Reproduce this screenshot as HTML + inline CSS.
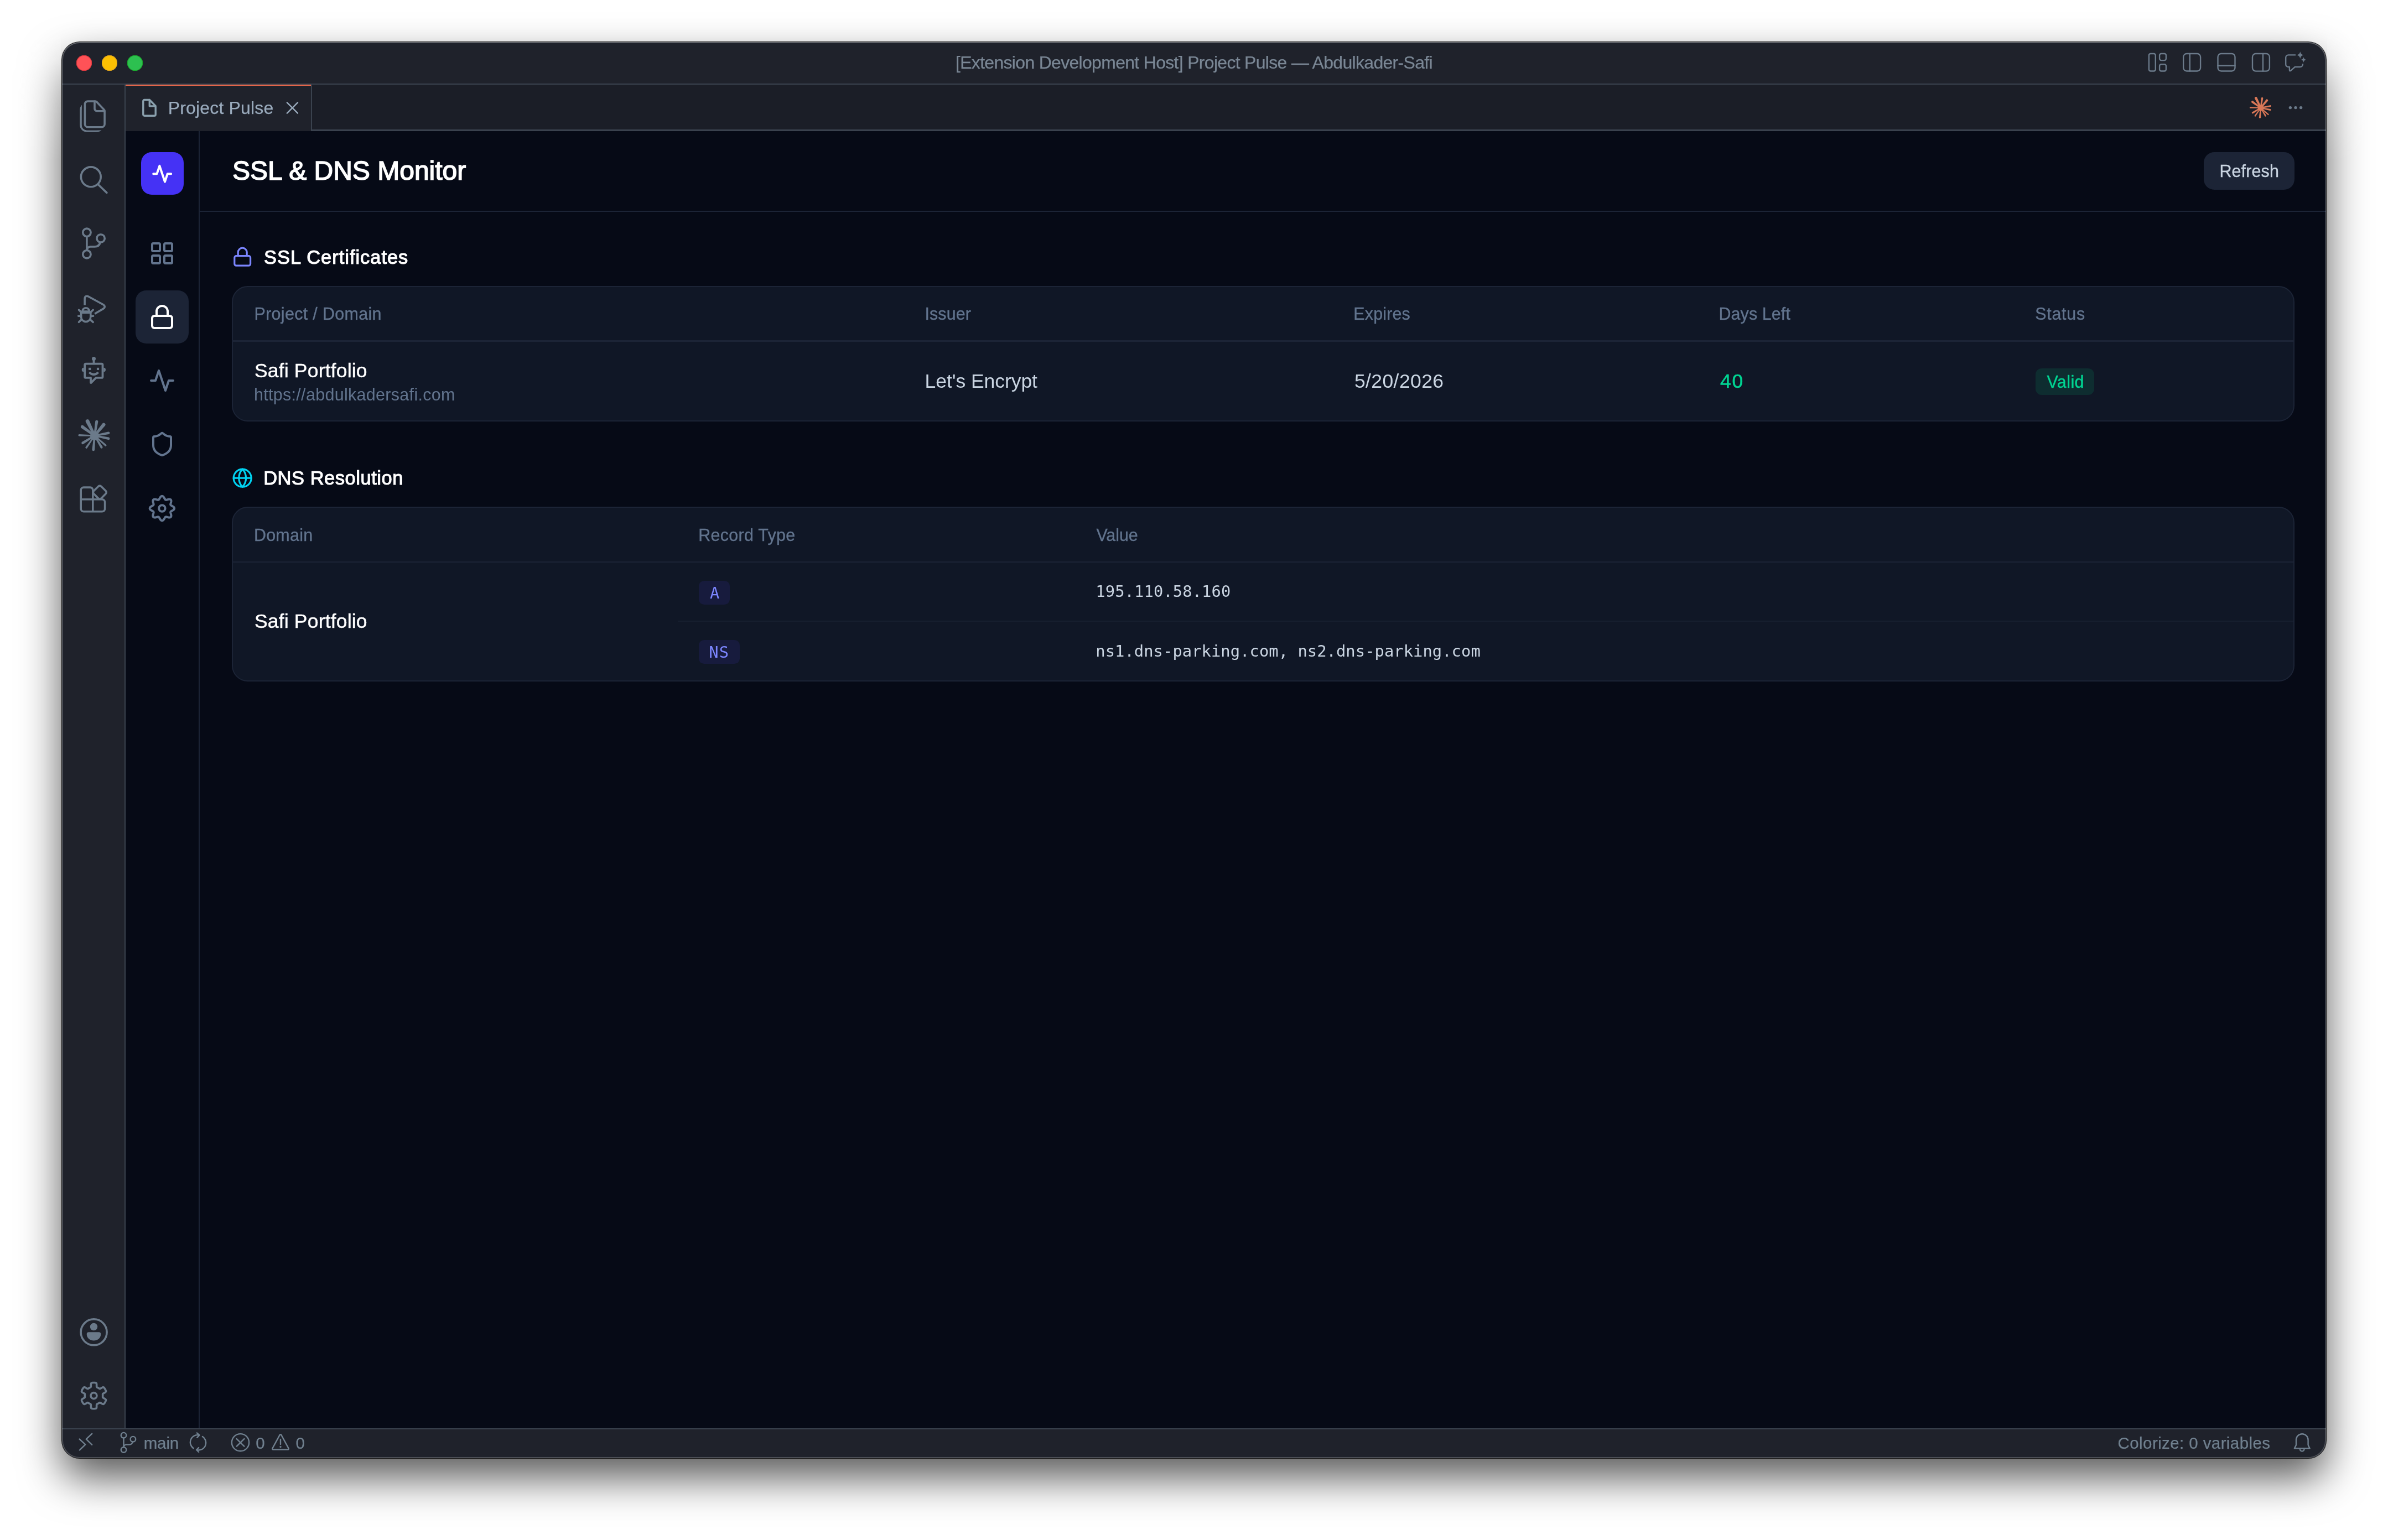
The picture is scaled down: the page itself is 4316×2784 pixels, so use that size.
<!DOCTYPE html>
<html lang="en"><head><meta charset="utf-8"><title>Project Pulse — SSL &amp; DNS Monitor</title>
<style>
html,body{margin:0;padding:0;background:#fff;}
body{width:4316px;height:2784px;position:relative;overflow:hidden;}
#shadow{position:absolute;left:112px;top:76px;width:4092px;height:2560px;border-radius:32px;background:#1f222b;
 box-shadow:0 0 0 1px rgba(0,0,0,.85),0 35px 76px rgba(0,0,0,.66);}
.fade{position:absolute;top:50px;width:110px;height:242px;background:linear-gradient(to bottom,rgba(255,255,255,0) 0,rgba(255,255,255,.34) 60px,rgba(255,255,255,0) 100%);}
#win{position:absolute;left:0;top:0;width:4316px;height:2784px;will-change:transform;clip-path:inset(76px 112px 148px 112px round 32px);}
#win div,#win span.t,#win svg{position:absolute;box-sizing:border-box;}
#win span.t{white-space:pre;display:block;}
#win header,#win nav,#win main,#win section,#win footer,#win aside{display:contents;}
#rim{position:absolute;left:112px;top:76px;width:4092px;height:2560px;border-radius:32px;box-sizing:border-box;
 box-shadow:inset 0 0 0 2px rgba(255,255,255,.2), inset 0 2px 0 0 rgba(255,255,255,.12);pointer-events:none;}
</style></head><body>
<div id="shadow"></div>
<div class="fade" style="left:0"></div><div class="fade" style="left:4206px"></div>
<div id="win">
<section aria-label="Window chrome">
<div style="left:112.0px;top:76.0px;width:4092.0px;height:2560.0px;background:#1f222b;"></div>
<div style="left:112.0px;top:150.6px;width:4092.0px;height:2.4px;background:#3a424e;"></div>
<div style="left:227.0px;top:153.0px;width:3977.0px;height:81.4px;background:#1b1e27;"></div>
<div style="left:227.0px;top:234.4px;width:3977.0px;height:2.4px;background:#3a424e;"></div>
<div style="left:227.0px;top:153.0px;width:335.0px;height:83.8px;background:#1f222b;"></div>
<div style="left:227.0px;top:153.0px;width:335.0px;height:2.2px;background:#f16a4b;"></div>
<div style="left:562.0px;top:153.0px;width:2.3px;height:83.8px;background:#3a424e;"></div>
<div style="left:224.7px;top:153.0px;width:2.3px;height:2428.6px;background:#3a424e;"></div>
<div style="left:227.0px;top:236.8px;width:3977.0px;height:2344.8px;background:#060a16;"></div>
<div style="left:359.0px;top:236.8px;width:2.4px;height:2344.8px;background:#1c2436;"></div>
<div style="left:361.4px;top:380.8px;width:3842.6px;height:2.4px;background:#1c2436;"></div>
<div style="left:112.0px;top:2581.6px;width:4092.0px;height:54.4px;background:#1f222b;"></div>
<div style="left:112.0px;top:2581.6px;width:4092.0px;height:2.4px;background:#3a424e;"></div>
</section><header aria-label="Title bar">
<div style="left:138px;top:100px;width:28px;height:28px;border-radius:50%;background:#ff5257;box-shadow:inset 0 0 0 1px #e0383e;"></div>
<div style="left:184px;top:100px;width:28px;height:28px;border-radius:50%;background:#fcc003;box-shadow:inset 0 0 0 1px #dea123;"></div>
<div style="left:230px;top:100px;width:28px;height:28px;border-radius:50%;background:#2dc050;box-shadow:inset 0 0 0 1px #1aab29;"></div>
<span class="t " style="left:1727.00px;top:97.33px;font:400 31.98px/1 'Liberation Sans', sans-serif;color:#7a8795;letter-spacing:-0.68px;-webkit-text-stroke:0.25px #7a8795;">[Extension Development Host] Project Pulse — Abdulkader-Safi</span>
</header><nav aria-label="Editor tabs">
<span class="t " style="left:303.80px;top:179.13px;font:400 31.98px/1 'Liberation Sans', sans-serif;color:#9aabbd;letter-spacing:0.17px;-webkit-text-stroke:0.25px #9aabbd;">Project Pulse</span>
</nav><main aria-label="Project Pulse webview"><header>
<span class="t " style="left:419.90px;top:285.17px;font:400 48.00px/1 'Liberation Sans', sans-serif;color:#ffffff;-webkit-text-stroke:1.5px #ffffff;">SSL &amp; DNS Monitor</span>
<div style="left:3982.8px;top:275px;width:164.2px;height:67.6px;border-radius:19.2px;background:#1c2436;"></div>
<span class="t " style="left:4011.40px;top:294.23px;font:400 30.44px/1 'Liberation Sans', sans-serif;color:#cad5e2;letter-spacing:0.16px;-webkit-text-stroke:0.4px #cad5e2;">Refresh</span>
</header><nav aria-label="Pulse navigation">
<div style="left:255px;top:274.8px;width:76.8px;height:76.8px;border-radius:19.2px;background:#4532f5;"></div>
<div style="left:245px;top:524.8px;width:96px;height:96px;border-radius:19.2px;background:#1c2436;"></div>
</nav><section aria-label="SSL Certificates">
<span class="t " style="left:477.00px;top:447.88px;font:400 34.40px/1 'Liberation Sans', sans-serif;color:#ffffff;letter-spacing:1.00px;-webkit-text-stroke:1.1px #ffffff;">SSL Certificates</span>
<div style="left:419px;top:517.2px;width:3728px;height:245.19999999999993px;border-radius:28.8px;background:#101726;border:2.4px solid #1c2436;"></div>
<div style="left:421.4px;top:615.2px;width:3723.2px;height:2.4px;background:#1c2436;"></div>
<span class="t " style="left:459.50px;top:552.23px;font:400 30.44px/1 'Liberation Sans', sans-serif;color:#62748e;letter-spacing:0.33px;-webkit-text-stroke:0.35px #62748e;">Project / Domain</span>
<span class="t " style="left:1671.50px;top:552.43px;font:400 30.44px/1 'Liberation Sans', sans-serif;color:#62748e;letter-spacing:0.09px;-webkit-text-stroke:0.35px #62748e;">Issuer</span>
<span class="t " style="left:2446.30px;top:552.43px;font:400 30.44px/1 'Liberation Sans', sans-serif;color:#62748e;letter-spacing:0.17px;-webkit-text-stroke:0.35px #62748e;">Expires</span>
<span class="t " style="left:3106.50px;top:552.43px;font:400 30.44px/1 'Liberation Sans', sans-serif;color:#62748e;letter-spacing:0.10px;-webkit-text-stroke:0.35px #62748e;">Days Left</span>
<span class="t " style="left:3678.20px;top:552.43px;font:400 30.44px/1 'Liberation Sans', sans-serif;color:#62748e;letter-spacing:0.73px;-webkit-text-stroke:0.35px #62748e;">Status</span>
<span class="t " style="left:459.90px;top:653.13px;font:400 35.52px/1 'Liberation Sans', sans-serif;color:#ffffff;letter-spacing:0.18px;-webkit-text-stroke:0.45px #ffffff;">Safi Portfolio</span>
<span class="t " style="left:458.90px;top:698.23px;font:400 30.44px/1 'Liberation Sans', sans-serif;color:#62748e;letter-spacing:0.33px;">https://abdulkadersafi.com</span>
<span class="t " style="left:1671.50px;top:671.93px;font:400 35.52px/1 'Liberation Sans', sans-serif;color:#cad5e2;letter-spacing:-0.06px;">Let's Encrypt</span>
<span class="t " style="left:2447.90px;top:672.23px;font:400 35.52px/1 'Liberation Sans', sans-serif;color:#cad5e2;letter-spacing:0.40px;">5/20/2026</span>
<span class="t " style="left:3108.90px;top:671.93px;font:400 35.52px/1 'Liberation Sans', sans-serif;color:#00d492;letter-spacing:1.76px;-webkit-text-stroke:0.5px #00d492;">40</span>
<div style="left:3678.9px;top:666px;width:106.2px;height:47.9px;border-radius:11px;background:#0e2d30;"></div>
<span class="t " style="left:3699.40px;top:675.23px;font:400 30.44px/1 'Liberation Sans', sans-serif;color:#00d492;letter-spacing:0.43px;-webkit-text-stroke:0.4px #00d492;">Valid</span>
</section><section aria-label="DNS Resolution">
<span class="t " style="left:476.20px;top:847.28px;font:400 34.40px/1 'Liberation Sans', sans-serif;color:#ffffff;letter-spacing:0.58px;-webkit-text-stroke:1.1px #ffffff;">DNS Resolution</span>
<div style="left:419px;top:916.4px;width:3728px;height:315.19999999999993px;border-radius:28.8px;background:#101726;border:2.4px solid #1c2436;"></div>
<div style="left:421.4px;top:1014.8px;width:3723.2px;height:2.4px;background:#1c2436;"></div>
<div style="left:1224.9px;top:1122.0px;width:2919.7px;height:2.4px;background:#161e2e;"></div>
<span class="t " style="left:458.90px;top:952.23px;font:400 30.44px/1 'Liberation Sans', sans-serif;color:#62748e;letter-spacing:0.27px;-webkit-text-stroke:0.35px #62748e;">Domain</span>
<span class="t " style="left:1262.30px;top:952.23px;font:400 30.44px/1 'Liberation Sans', sans-serif;color:#62748e;letter-spacing:0.28px;-webkit-text-stroke:0.35px #62748e;">Record Type</span>
<span class="t " style="left:1981.40px;top:952.23px;font:400 30.44px/1 'Liberation Sans', sans-serif;color:#62748e;letter-spacing:-0.07px;-webkit-text-stroke:0.35px #62748e;">Value</span>
<span class="t " style="left:459.90px;top:1106.13px;font:400 35.52px/1 'Liberation Sans', sans-serif;color:#ffffff;letter-spacing:0.18px;-webkit-text-stroke:0.45px #ffffff;">Safi Portfolio</span>
<div style="left:1263.2px;top:1050px;width:55.6px;height:42.8px;border-radius:9.6px;background:#171b3d;"></div>
<div style="left:1263.2px;top:1157.4px;width:73.8px;height:42.8px;border-radius:9.6px;background:#171b3d;"></div>
<span class="t " style="left:1283.00px;top:1057.64px;font:400 28.80px/1 'DejaVu Sans Mono', 'Liberation Mono', monospace;color:#7c86ff;">A</span>
<span class="t " style="left:1281.20px;top:1165.14px;font:400 28.80px/1 'DejaVu Sans Mono', 'Liberation Mono', monospace;color:#7c86ff;letter-spacing:1.16px;">NS</span>
<span class="t " style="left:1980.30px;top:1054.64px;font:400 28.80px/1 'DejaVu Sans Mono', 'Liberation Mono', monospace;color:#cad5e2;letter-spacing:0.10px;">195.110.58.160</span>
<span class="t " style="left:1980.30px;top:1162.64px;font:400 28.80px/1 'DejaVu Sans Mono', 'Liberation Mono', monospace;color:#cad5e2;letter-spacing:0.05px;">ns1.dns-parking.com, ns2.dns-parking.com</span>
</section></main><footer aria-label="Status bar">
<span class="t " style="left:259.70px;top:2594.31px;font:400 29.52px/1 'Liberation Sans', sans-serif;color:#70808f;letter-spacing:-0.15px;-webkit-text-stroke:0.25px #70808f;">main</span>
<span class="t " style="left:462.30px;top:2594.31px;font:400 29.52px/1 'Liberation Sans', sans-serif;color:#70808f;-webkit-text-stroke:0.25px #70808f;">0</span>
<span class="t " style="left:534.40px;top:2594.31px;font:400 29.52px/1 'Liberation Sans', sans-serif;color:#70808f;-webkit-text-stroke:0.25px #70808f;">0</span>
<span class="t " style="left:3827.60px;top:2594.01px;font:400 29.52px/1 'Liberation Sans', sans-serif;color:#70808f;letter-spacing:0.40px;-webkit-text-stroke:0.25px #70808f;">Colorize: 0 variables</span>
</footer><aside aria-hidden="true">
<svg style="left:130.0px;top:170.0px;width:80.0px;height:80.0px;" viewBox="0 0 80 80" fill="none" stroke="#6b7a8a" stroke-width="3.6" stroke-linecap="round" stroke-linejoin="round"><path d="M41 13.1H28.6a5.2 5.2 0 0 0-5.2 5.2V54.6a5.2 5.2 0 0 0 5.2 5.2H53.9a5.2 5.2 0 0 0 5.2-5.2V30.6a3 3 0 0 0-.9-2.1L44.6 14.1a3.4 3.4 0 0 0-2.4-1Z"/><path d="M41 13.3V26.6a4.2 4.2 0 0 0 4.2 4.2H58.9"/><mask id="mf" maskUnits="userSpaceOnUse" x="0" y="0" width="80" height="80"><rect width="80" height="80" fill="#fff" stroke="none"/><rect x="17.9" y="-10" width="70" height="75.4" rx="9" fill="#000" stroke="none"/></mask><rect x="16.1" y="17.5" width="39.5" height="49.5" rx="11" mask="url(#mf)"/></svg>
<svg style="left:130.0px;top:285.0px;width:80.0px;height:80.0px;" viewBox="0 0 80 80" fill="none" stroke="#6b7a8a" stroke-width="3.6" stroke-linecap="round" stroke-linejoin="round"><circle cx="34.3" cy="34.8" r="17.9"/><path d="M47.6 48.7L62.9 63.4"/></svg>
<svg style="left:130.0px;top:400.0px;width:80.0px;height:80.0px;" viewBox="0 0 80 80" fill="none" stroke="#6b7a8a" stroke-width="3.6" stroke-linecap="round" stroke-linejoin="round"><circle cx="26.9" cy="20.3" r="7.15"/><circle cx="52.1" cy="30.9" r="7.15"/><circle cx="26.9" cy="59.7" r="7.15"/><path d="M26.9 27.5V52.5M51.2 38C50 43.5 46 46 41 46H33.5a6.6 6.6 0 0 0-6.6 6.5" stroke-linecap="butt"/></svg>
<svg style="left:130.0px;top:520.0px;width:80.0px;height:80.0px;" viewBox="0 0 80 80" fill="none" stroke="#6b7a8a" stroke-width="3.6" stroke-linecap="round" stroke-linejoin="round"><path d="M23.1 31.6V20.3C23.1 15.2 26.6 14.2 30.2 16.2L56.3 30.5C60.2 32.7 60.2 36.3 56.3 38.4L41.2 47.2" stroke-linecap="butt"/><path d="M16.6 45.2H33.8V53a8.6 8.6 0 0 1-17.2 0Z"/><path d="M18.9 43a6.3 6.3 0 0 1 12.6 0Z"/><path d="M12.5 40.3L17 44.6M38.2 40.3L33.6 44.6M11.7 51.3H16.6M33.8 51.3H38.6M12.5 62.3L17.8 57.4M38.2 62.3L32.6 57.4"/></svg>
<svg style="left:130.0px;top:630.0px;width:80.0px;height:80.0px;" viewBox="0 0 80 80" fill="none" stroke="#6b7a8a" stroke-width="3.8" stroke-linecap="round" stroke-linejoin="round"><circle cx="39.5" cy="18.4" r="3.5" fill="#6b7a8a" stroke="none"/><path d="M39.5 18.4V27.6" stroke-linecap="butt"/><path d="M25.2 27.6H53.5a2 2 0 0 1 2 2V50.9a2 2 0 0 1-2 2H43.6L34.7 61.9a.4.4 0 0 1-.7-.3V52.9H25.2a2 2 0 0 1-2-2V29.6a2 2 0 0 1 2-2Z"/><path d="M21.4 34.7a3.7 3.7 0 0 0 0 7.4ZM57.3 34.7a3.7 3.7 0 0 1 0 7.4Z" fill="#6b7a8a" stroke="none"/><rect x="30.1" y="34.8" width="4.2" height="4.2" fill="#6b7a8a" stroke="none"/><rect x="44.9" y="34.8" width="4.2" height="4.2" fill="#6b7a8a" stroke="none"/><path d="M31.3 43.2Q39.5 51 47.7 43.2" stroke-linecap="butt"/></svg>
<svg style="left:130.0px;top:746.0px;width:80.0px;height:80.0px;" viewBox="0 0 80 80" fill="#6b7a8a" stroke="none" stroke-width="0" stroke-linecap="round" stroke-linejoin="round"><path d="M41.42 36.93L31.15 14.01A3.40 3.40 0 0 0 25.06 17.03L37.03 39.10Z"/><path d="M43.43 37.92L47.32 16.51A2.60 2.60 0 0 0 42.18 15.75L39.73 37.37Z"/><path d="M45.27 39.94L59.80 23.73A3.10 3.10 0 0 0 55.02 19.78L41.83 37.10Z"/><path d="M45.25 42.51L66.52 39.09A2.35 2.35 0 0 0 65.63 34.47L44.61 39.18Z"/><path d="M44.57 44.07L65.60 49.11A2.35 2.35 0 0 0 66.56 44.51L45.26 40.76Z"/><path d="M43.14 45.22L59.57 60.37A1.80 1.80 0 0 0 61.95 57.67L44.86 43.27Z"/><path d="M41.75 45.81L51.77 63.75A2.10 2.10 0 0 0 55.37 61.60L44.35 44.26Z"/><path d="M38.97 45.44L36.44 66.86A2.35 2.35 0 0 0 41.12 67.27L42.34 45.73Z"/><path d="M37.65 44.14L24.63 61.98A1.80 1.80 0 0 0 27.59 64.04L39.78 45.62Z"/><path d="M36.71 42.25L18.27 52.81A2.35 2.35 0 0 0 20.73 56.81L38.48 45.14Z"/><path d="M37.04 40.19L13.27 39.02A1.80 1.80 0 0 0 13.17 42.62L36.97 42.78Z"/><path d="M38.96 37.59L20.49 23.26A2.85 2.85 0 0 0 17.15 27.88L36.56 40.92Z"/><circle cx="41.0" cy="41.6" r="8.20"/></svg>
<svg style="left:130.0px;top:862.0px;width:80.0px;height:80.0px;" viewBox="0 0 80 80" fill="none" stroke="#6b7a8a" stroke-width="3.6" stroke-linecap="round" stroke-linejoin="round"><path d="M37.8 62.7V23.9a4.8 4.8 0 0 0-4.8-4.8H21.2a5 5 0 0 0-5 5V57.7a5 5 0 0 0 5 5H54.6a5 5 0 0 0 5-5V45.8a5 5 0 0 0-5-5H16.2"/><rect x="-9.5" y="-9.5" width="19" height="19" rx="3.6" transform="translate(50.3 28.05) rotate(45)"/></svg>
<svg style="left:130.0px;top:2370.0px;width:80.0px;height:80.0px;" viewBox="0 0 80 80" fill="none" stroke="#6b7a8a" stroke-width="3.6" stroke-linecap="round" stroke-linejoin="round"><circle cx="39.6" cy="38.3" r="23.5"/><circle cx="39.5" cy="28.6" r="6.75" fill="#6b7a8a" stroke="none"/><path d="M30.2 38.2H48.8a3.5 3.5 0 0 1 3.5 3.5C52.3 49 46 53.5 39.5 53.5S26.7 49 26.7 41.7a3.5 3.5 0 0 1 3.5-3.5Z" fill="#6b7a8a" stroke="none"/></svg>
<svg style="left:130.0px;top:2484.0px;width:80.0px;height:80.0px;" viewBox="0 0 80 80" fill="none" stroke="#6b7a8a" stroke-width="3.6" stroke-linecap="round" stroke-linejoin="round"><path d="M55.70 39.10L55.69 39.52L55.68 39.95L55.66 40.37L55.63 40.80L55.60 41.22L55.60 41.65L55.69 42.10L56.05 42.62L57.01 43.30L58.72 44.25L60.39 45.29L61.26 46.17L61.50 46.89L61.44 47.52L61.27 48.12L61.04 48.69L60.80 49.26L60.53 49.81L60.24 50.36L59.94 50.90L59.62 51.43L59.29 51.95L58.94 52.46L58.58 52.96L58.19 53.44L57.76 53.89L57.24 54.25L56.51 54.41L55.31 54.10L53.57 53.17L51.90 52.16L50.82 51.67L50.19 51.62L49.76 51.77L49.39 51.98L49.03 52.22L48.68 52.46L48.32 52.69L47.96 52.91L47.60 53.13L47.23 53.34L46.86 53.54L46.48 53.73L46.10 53.91L45.71 54.10L45.34 54.32L45.00 54.62L44.73 55.19L44.61 56.37L44.65 58.32L44.59 60.29L44.26 61.48L43.75 62.04L43.18 62.31L42.58 62.46L41.97 62.55L41.35 62.62L40.74 62.67L40.12 62.69L39.50 62.70L38.88 62.69L38.26 62.67L37.65 62.62L37.03 62.55L36.42 62.46L35.82 62.31L35.25 62.04L34.74 61.48L34.41 60.29L34.35 58.32L34.39 56.37L34.27 55.19L34.00 54.62L33.66 54.32L33.29 54.10L32.90 53.91L32.52 53.73L32.14 53.54L31.77 53.34L31.40 53.13L31.04 52.91L30.68 52.69L30.32 52.46L29.97 52.22L29.61 51.98L29.24 51.77L28.81 51.62L28.18 51.67L27.10 52.16L25.43 53.17L23.69 54.10L22.49 54.41L21.76 54.25L21.24 53.89L20.81 53.44L20.42 52.96L20.06 52.46L19.71 51.95L19.38 51.43L19.06 50.90L18.76 50.36L18.47 49.81L18.20 49.26L17.96 48.69L17.73 48.12L17.56 47.52L17.50 46.89L17.74 46.17L18.61 45.29L20.28 44.25L21.99 43.30L22.95 42.62L23.31 42.10L23.40 41.65L23.40 41.22L23.37 40.80L23.34 40.37L23.32 39.95L23.31 39.52L23.30 39.10L23.31 38.68L23.32 38.25L23.34 37.83L23.37 37.40L23.40 36.98L23.40 36.55L23.31 36.10L22.95 35.58L21.99 34.90L20.28 33.95L18.61 32.91L17.74 32.03L17.50 31.31L17.56 30.68L17.73 30.08L17.96 29.51L18.20 28.94L18.47 28.39L18.76 27.84L19.06 27.30L19.38 26.77L19.71 26.25L20.06 25.74L20.42 25.24L20.81 24.76L21.24 24.31L21.76 23.95L22.49 23.79L23.69 24.10L25.43 25.03L27.10 26.04L28.18 26.53L28.81 26.58L29.24 26.43L29.61 26.22L29.97 25.98L30.32 25.74L30.68 25.51L31.04 25.29L31.40 25.07L31.77 24.86L32.14 24.66L32.52 24.47L32.90 24.29L33.29 24.10L33.66 23.88L34.00 23.58L34.27 23.01L34.39 21.83L34.35 19.88L34.41 17.91L34.74 16.72L35.25 16.16L35.82 15.89L36.42 15.74L37.03 15.65L37.65 15.58L38.26 15.53L38.88 15.51L39.50 15.50L40.12 15.51L40.74 15.53L41.35 15.58L41.97 15.65L42.58 15.74L43.18 15.89L43.75 16.16L44.26 16.72L44.59 17.91L44.65 19.88L44.61 21.83L44.73 23.01L45.00 23.58L45.34 23.88L45.71 24.10L46.10 24.29L46.48 24.47L46.86 24.66L47.23 24.86L47.60 25.07L47.96 25.29L48.32 25.51L48.68 25.74L49.03 25.98L49.39 26.22L49.76 26.43L50.19 26.58L50.82 26.53L51.90 26.04L53.57 25.03L55.31 24.10L56.51 23.79L57.24 23.95L57.76 24.31L58.19 24.76L58.58 25.24L58.94 25.74L59.29 26.25L59.62 26.77L59.94 27.30L60.24 27.84L60.53 28.39L60.80 28.94L61.04 29.51L61.27 30.08L61.44 30.68L61.50 31.31L61.26 32.03L60.39 32.91L58.72 33.95L57.01 34.90L56.05 35.58L55.69 36.10L55.60 36.55L55.60 36.98L55.63 37.40L55.66 37.83L55.68 38.25L55.69 38.68Z"/><circle cx="39.5" cy="39.1" r="5.5"/></svg>
<svg style="left:3870.0px;top:80.0px;width:320.0px;height:70.0px;" viewBox="3870 80 320 70" fill="none" stroke="#6b7a8a" stroke-width="2.4" stroke-linecap="round" stroke-linejoin="round"><rect x="3883.9" y="97" width="11.9" height="31.5" rx="3"/><rect x="3903.1" y="97" width="11.8" height="12.1" rx="3"/><rect x="3903.1" y="116.3" width="11.8" height="12.2" rx="3"/><rect x="3946.2" y="97" width="30.9" height="31.5" rx="6"/><path d="M3957.8 97V128.5"/><rect x="4008.5" y="97" width="31" height="31.5" rx="6"/><path d="M4008.5 118.7H4039.5"/><rect x="4071" y="97" width="30.9" height="31.6" rx="6"/><path d="M4090 97V128.6"/><path d="M4149 99.4H4136a4.8 4.8 0 0 0-4.8 4.8V116.2a4.8 4.8 0 0 0 4.8 4.8H4137.9V126.6c0 1.7 1 2.2 2.2 1.2L4147.8 121H4157a5 5 0 0 0 5-5V115.3" stroke-linecap="butt"/></svg>
<svg style="left:4140.0px;top:85.0px;width:40.0px;height:40.0px;" viewBox="4140 85 40 40" fill="#6b7a8a" stroke="none" stroke-width="0" stroke-linecap="round" stroke-linejoin="round"><path d="M4157.3 93.3Q4158.308 98.592 4163.6 99.6Q4158.308 100.60799999999999 4157.3 105.89999999999999Q4156.292 100.60799999999999 4151.0 99.6Q4156.292 98.592 4157.3 93.3Z"/><path d="M4163.4 103.3Q4164.168 107.332 4168.2 108.1Q4164.168 108.868 4163.4 112.89999999999999Q4162.632 108.868 4158.599999999999 108.1Q4162.632 107.332 4163.4 103.3Z"/></svg>
<svg style="left:4056.0px;top:165.0px;width:60.0px;height:60.0px;" viewBox="0 0 60 60" fill="#d97757" stroke="none" stroke-width="0" stroke-linecap="round" stroke-linejoin="round"><path d="M30.29 26.82L23.30 11.24A2.31 2.31 0 0 0 19.16 13.29L27.30 28.30Z"/><path d="M31.66 27.49L34.30 12.94A1.77 1.77 0 0 0 30.80 12.42L29.14 27.12Z"/><path d="M32.90 28.87L42.78 17.85A2.11 2.11 0 0 0 39.53 15.16L30.56 26.94Z"/><path d="M32.89 30.62L47.35 28.29A1.60 1.60 0 0 0 46.75 25.15L32.45 28.36Z"/><path d="M32.43 31.68L46.73 35.11A1.60 1.60 0 0 0 47.38 31.98L32.90 29.43Z"/><path d="M31.46 32.46L42.63 42.77A1.22 1.22 0 0 0 44.25 40.93L32.62 31.14Z"/><path d="M30.51 32.86L37.32 45.06A1.43 1.43 0 0 0 39.77 43.60L32.28 31.81Z"/><path d="M28.62 32.61L26.90 47.18A1.60 1.60 0 0 0 30.08 47.45L30.91 32.81Z"/><path d="M27.72 31.73L18.87 43.86A1.22 1.22 0 0 0 20.88 45.26L29.17 32.74Z"/><path d="M27.08 30.44L14.54 37.62A1.60 1.60 0 0 0 16.22 40.34L28.28 32.40Z"/><path d="M27.31 29.04L11.14 28.25A1.22 1.22 0 0 0 11.08 30.69L27.26 30.80Z"/><path d="M28.61 27.28L16.06 17.53A1.94 1.94 0 0 0 13.78 20.67L26.98 29.54Z"/><circle cx="30" cy="30" r="5.58"/></svg>
<svg style="left:4130.0px;top:185.0px;width:40.0px;height:20.0px;" viewBox="4130 185 40 20" fill="#6b7a8a" stroke="none" stroke-width="0" stroke-linecap="round" stroke-linejoin="round"><circle cx="4139.4" cy="194.6" r="2.7"/><circle cx="4149" cy="194.6" r="2.7"/><circle cx="4158.6" cy="194.6" r="2.7"/></svg>
<svg style="left:250.0px;top:170.0px;width:40.0px;height:50.0px;" viewBox="250 170 40 50" fill="none" stroke="#8aa0ad" stroke-width="3.4" stroke-linecap="round" stroke-linejoin="round"><path d="M270.3 180.5H261a2.2 2.2 0 0 0-2.2 2.2V207a2.2 2.2 0 0 0 2.2 2.2H279a2.2 2.2 0 0 0 2.2-2.2V191.6L270.3 180.5V191.9H281.2"/></svg>
<svg style="left:510.0px;top:178.0px;width:36.0px;height:34.0px;" viewBox="510 178 36 34" fill="none" stroke="#9aabbd" stroke-width="2.4" stroke-linecap="round" stroke-linejoin="round"><path d="M518.8 185.4L538 204.7M538 185.4L518.8 204.7"/></svg>
<svg style="left:138.0px;top:2586.0px;width:34.0px;height:42.0px;" viewBox="138 2586 34 42" fill="none" stroke="#70808f" stroke-width="2.4" stroke-linecap="round" stroke-linejoin="round"><path d="M143.6 2601.6L154.3 2611.4L143.9 2621.5M166.2 2591.8L155.8 2601.7L166.2 2611.8"/></svg>
<svg style="left:214.0px;top:2586.0px;width:36.0px;height:44.0px;" viewBox="214 2586 36 44" fill="none" stroke="#70808f" stroke-width="2.4" stroke-linecap="round" stroke-linejoin="round"><circle cx="223.5" cy="2594.7" r="4.8"/><circle cx="240.4" cy="2601.7" r="4.8"/><circle cx="223.5" cy="2621" r="4.8"/><path d="M223.5 2599.5V2616.2M239.8 2606.5C239 2610 236.3 2611.6 233 2611.6H228.3a4.6 4.6 0 0 0-4.8 4.6" stroke-linecap="butt"/></svg>
<svg style="left:340.0px;top:2586.0px;width:36.0px;height:44.0px;" viewBox="340 2586 36 44" fill="none" stroke="#70808f" stroke-width="2.4" stroke-linecap="round" stroke-linejoin="round"><path d="M349.6 2618.2A13.2 13.2 0 0 1 360.2 2594.5M355.9 2590.4L360.5 2594.4L356.3 2598.8M365.9 2597.1A13.2 13.2 0 0 1 355.3 2621M359.1 2617L355 2621L359.1 2625"/></svg>
<svg style="left:414.0px;top:2588.0px;width:42.0px;height:40.0px;" viewBox="414 2588 42 40" fill="none" stroke="#70808f" stroke-width="2.4" stroke-linecap="round" stroke-linejoin="round"><circle cx="434.5" cy="2607.7" r="15.6"/><path d="M427.7 2601.1L441.4 2614.6M441.4 2601.1L427.7 2614.6"/></svg>
<svg style="left:488.0px;top:2588.0px;width:40.0px;height:38.0px;" viewBox="488 2588 40 38" fill="none" stroke="#70808f" stroke-width="2.4" stroke-linecap="round" stroke-linejoin="round"><path d="M505.6 2594.1a1.6 1.6 0 0 1 2.8 0L521.6 2618.4a1.5 1.5 0 0 1-1.3 2.2H493.7a1.5 1.5 0 0 1-1.3-2.2Z"/><path d="M507 2601.9V2611"/><circle cx="507" cy="2615.6" r="1.7" fill="#70808f" stroke="none"/></svg>
<svg style="left:4140.0px;top:2586.0px;width:42.0px;height:44.0px;" viewBox="4140 2586 42 44" fill="none" stroke="#70808f" stroke-width="2.4" stroke-linecap="round" stroke-linejoin="round"><path d="M4146.9 2618.4L4150 2612.2V2603.1a10.8 10.8 0 0 1 21.6 0V2612.2L4174.6 2618.4Z"/><path d="M4156.9 2619.7a3.8 3.8 0 0 0 7.6 0" stroke-linecap="butt"/></svg>
<svg style="left:274.0px;top:295.0px;width:38.4px;height:38.4px;" viewBox="0 0 24 24" fill="none" stroke="#ffffff" stroke-width="2.5" stroke-linecap="round" stroke-linejoin="round"><polyline points="22 12 18 12 15 21 9 3 6 12 2 12"/></svg>
<svg style="left:269.0px;top:433.8px;width:48.0px;height:48.0px;" viewBox="0 0 24 24" fill="none" stroke="#62748e" stroke-width="2" stroke-linecap="round" stroke-linejoin="round"><rect width="7" height="7" x="3" y="3" rx="1"/><rect width="7" height="7" x="14" y="3" rx="1"/><rect width="7" height="7" x="14" y="14" rx="1"/><rect width="7" height="7" x="3" y="14" rx="1"/></svg>
<svg style="left:269.0px;top:548.8px;width:48.0px;height:48.0px;" viewBox="0 0 24 24" fill="none" stroke="#ffffff" stroke-width="2" stroke-linecap="round" stroke-linejoin="round"><rect width="18" height="11" x="3" y="11" rx="2" ry="2"/><path d="M7 11V7a5 5 0 0 1 10 0v4"/></svg>
<svg style="left:269.0px;top:664.0px;width:48.0px;height:48.0px;" viewBox="0 0 24 24" fill="none" stroke="#62748e" stroke-width="2" stroke-linecap="round" stroke-linejoin="round"><polyline points="22 12 18 12 15 21 9 3 6 12 2 12"/></svg>
<svg style="left:269.0px;top:779.2px;width:48.0px;height:48.0px;" viewBox="0 0 24 24" fill="none" stroke="#62748e" stroke-width="2" stroke-linecap="round" stroke-linejoin="round"><path d="M20 13c0 5-3.5 7.5-7.66 8.95a1 1 0 0 1-.67-.01C7.5 20.5 4 18 4 13V6a1 1 0 0 1 1-1c2 0 4.5-1.2 6.24-2.72a1.17 1.17 0 0 1 1.52 0C14.51 3.81 17 5 19 5a1 1 0 0 1 1 1z"/></svg>
<svg style="left:253.0px;top:878.0px;width:80.0px;height:80.0px;" viewBox="0 0 80 80" fill="none" stroke="#62748e" stroke-width="4" stroke-linecap="round" stroke-linejoin="round"><path d="M62.10 41.00L62.03 41.58L61.83 42.15L61.51 42.70L61.07 43.23L60.55 43.72L59.95 44.18L59.31 44.60L58.64 44.98L57.99 45.34L57.36 45.68L56.78 46.00L56.28 46.32L55.87 46.65L55.55 47.01L55.33 47.39L55.21 47.82L55.19 48.29L55.25 48.82L55.38 49.40L55.55 50.04L55.76 50.72L55.97 51.44L56.17 52.18L56.32 52.93L56.42 53.68L56.45 54.40L56.38 55.08L56.22 55.70L55.96 56.24L55.60 56.70L55.14 57.06L54.60 57.32L53.98 57.48L53.30 57.55L52.58 57.52L51.83 57.42L51.08 57.27L50.34 57.07L49.62 56.86L48.94 56.65L48.30 56.48L47.72 56.35L47.19 56.29L46.72 56.31L46.29 56.43L45.91 56.65L45.55 56.97L45.22 57.38L44.90 57.88L44.58 58.46L44.24 59.09L43.88 59.74L43.50 60.41L43.08 61.05L42.62 61.65L42.13 62.17L41.60 62.61L41.05 62.93L40.48 63.13L39.90 63.20L39.32 63.13L38.75 62.93L38.20 62.61L37.67 62.17L37.18 61.65L36.72 61.05L36.30 60.41L35.92 59.74L35.56 59.09L35.22 58.46L34.90 57.88L34.58 57.38L34.25 56.97L33.89 56.65L33.51 56.43L33.08 56.31L32.61 56.29L32.08 56.35L31.50 56.48L30.86 56.65L30.18 56.86L29.46 57.07L28.72 57.27L27.97 57.42L27.22 57.52L26.50 57.55L25.82 57.48L25.20 57.32L24.66 57.06L24.20 56.70L23.84 56.24L23.58 55.70L23.42 55.08L23.35 54.40L23.38 53.68L23.48 52.93L23.63 52.18L23.83 51.44L24.04 50.72L24.25 50.04L24.42 49.40L24.55 48.82L24.61 48.29L24.59 47.82L24.47 47.39L24.25 47.01L23.93 46.65L23.52 46.32L23.02 46.00L22.44 45.68L21.81 45.34L21.16 44.98L20.49 44.60L19.85 44.18L19.25 43.72L18.73 43.23L18.29 42.70L17.97 42.15L17.77 41.58L17.70 41.00L17.77 40.42L17.97 39.85L18.29 39.30L18.73 38.77L19.25 38.28L19.85 37.82L20.49 37.40L21.16 37.02L21.81 36.66L22.44 36.32L23.02 36.00L23.52 35.68L23.93 35.35L24.25 34.99L24.47 34.61L24.59 34.18L24.61 33.71L24.55 33.18L24.42 32.60L24.25 31.96L24.04 31.28L23.83 30.56L23.63 29.82L23.48 29.07L23.38 28.32L23.35 27.60L23.42 26.92L23.58 26.30L23.84 25.76L24.20 25.30L24.66 24.94L25.20 24.68L25.82 24.52L26.50 24.45L27.22 24.48L27.97 24.58L28.72 24.73L29.46 24.93L30.18 25.14L30.86 25.35L31.50 25.52L32.08 25.65L32.61 25.71L33.08 25.69L33.51 25.57L33.89 25.35L34.25 25.03L34.58 24.62L34.90 24.12L35.22 23.54L35.56 22.91L35.92 22.26L36.30 21.59L36.72 20.95L37.18 20.35L37.67 19.83L38.20 19.39L38.75 19.07L39.32 18.87L39.90 18.80L40.48 18.87L41.05 19.07L41.60 19.39L42.13 19.83L42.62 20.35L43.08 20.95L43.50 21.59L43.88 22.26L44.24 22.91L44.58 23.54L44.90 24.12L45.22 24.62L45.55 25.03L45.91 25.35L46.29 25.57L46.72 25.69L47.19 25.71L47.72 25.65L48.30 25.52L48.94 25.35L49.62 25.14L50.34 24.93L51.08 24.73L51.83 24.58L52.58 24.48L53.30 24.45L53.98 24.52L54.60 24.68L55.14 24.94L55.60 25.30L55.96 25.76L56.22 26.30L56.38 26.92L56.45 27.60L56.42 28.32L56.32 29.07L56.17 29.82L55.97 30.56L55.76 31.28L55.55 31.96L55.38 32.60L55.25 33.18L55.19 33.71L55.21 34.18L55.33 34.61L55.55 34.99L55.87 35.35L56.28 35.68L56.78 36.00L57.36 36.32L57.99 36.66L58.64 37.02L59.31 37.40L59.95 37.82L60.55 38.28L61.07 38.77L61.51 39.30L61.83 39.85L62.03 40.42Z"/><circle cx="39.9" cy="41" r="5.7"/></svg>
<svg style="left:419.0px;top:445.2px;width:38.4px;height:38.4px;" viewBox="0 0 24 24" fill="none" stroke="#7c86ff" stroke-width="2" stroke-linecap="round" stroke-linejoin="round"><rect width="18" height="11" x="3" y="11" rx="2" ry="2"/><path d="M7 11V7a5 5 0 0 1 10 0v4"/></svg>
<svg style="left:419.0px;top:845.0px;width:38.4px;height:38.4px;" viewBox="0 0 24 24" fill="none" stroke="#00d3f2" stroke-width="2" stroke-linecap="round" stroke-linejoin="round"><circle cx="12" cy="12" r="10"/><path d="M12 2a14.5 14.5 0 0 0 0 20 14.5 14.5 0 0 0 0-20"/><path d="M2 12h20"/></svg>
</aside>
</div>
<div id="rim"></div>
</body></html>
